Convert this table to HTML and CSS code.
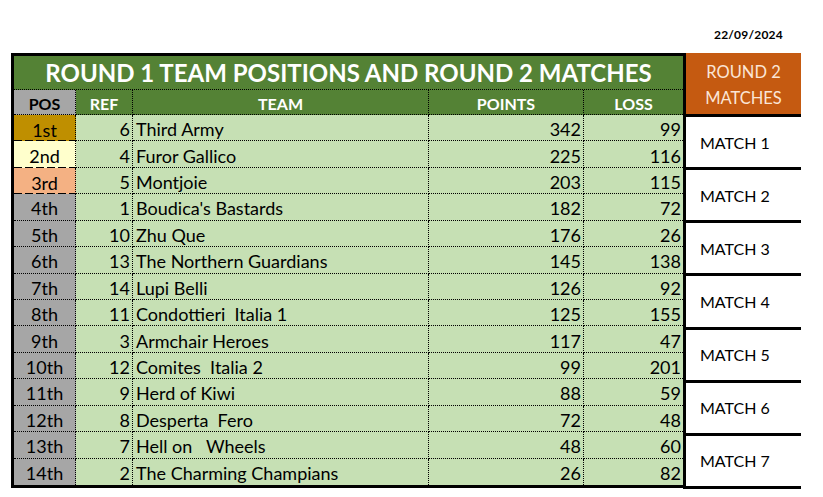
FILE: index.html
```html
<!DOCTYPE html>
<html>
<head>
<meta charset="utf-8">
<link rel="stylesheet" href="styles.css">
</head>
<body>
<div class="topbar"><span class="date">22/09/2024</span></div>
<div class="sheet">
  <div class="standings">
    <div class="title">ROUND 1 TEAM POSITIONS AND ROUND 2 MATCHES</div>
    <div class="grid">
      <div class="hd pos-hd">POS</div>
      <div class="hd">REF</div>
      <div class="hd">TEAM</div>
      <div class="hd">POINTS</div>
      <div class="hd last">LOSS</div>

      <div class="pos gold dash">1st</div><div class="c num">6</div><div class="c team">Third Army</div><div class="c num">342</div><div class="c num last">99</div>
      <div class="pos cream dash">2nd</div><div class="c num">4</div><div class="c team">Furor Gallico</div><div class="c num">225</div><div class="c num last">116</div>
      <div class="pos salmon dash">3rd</div><div class="c num">5</div><div class="c team">Montjoie</div><div class="c num">203</div><div class="c num last">115</div>
      <div class="pos">4th</div><div class="c num">1</div><div class="c team">Boudica's Bastards</div><div class="c num">182</div><div class="c num last">72</div>
      <div class="pos">5th</div><div class="c num">10</div><div class="c team">Zhu Que</div><div class="c num">176</div><div class="c num last">26</div>
      <div class="pos">6th</div><div class="c num">13</div><div class="c team">The Northern Guardians</div><div class="c num">145</div><div class="c num last">138</div>
      <div class="pos">7th</div><div class="c num">14</div><div class="c team">Lupi Belli</div><div class="c num">126</div><div class="c num last">92</div>
      <div class="pos">8th</div><div class="c num">11</div><div class="c team">Condottieri&nbsp; Italia 1</div><div class="c num">125</div><div class="c num last">155</div>
      <div class="pos">9th</div><div class="c num">3</div><div class="c team">Armchair Heroes</div><div class="c num">117</div><div class="c num last">47</div>
      <div class="pos">10th</div><div class="c num">12</div><div class="c team">Comites&nbsp; Italia 2</div><div class="c num">99</div><div class="c num last">201</div>
      <div class="pos">11th</div><div class="c num">9</div><div class="c team">Herd of Kiwi</div><div class="c num">88</div><div class="c num last">59</div>
      <div class="pos">12th</div><div class="c num">8</div><div class="c team">Desperta&nbsp; Fero</div><div class="c num">72</div><div class="c num last">48</div>
      <div class="pos">13th</div><div class="c num">7</div><div class="c team">Hell on&nbsp;&nbsp; Wheels</div><div class="c num">48</div><div class="c num last">60</div>
      <div class="pos bottom">14th</div><div class="c num bottom">2</div><div class="c team bottom">The Charming Champians</div><div class="c num bottom">26</div><div class="c num last bottom">82</div>
    </div>
  </div>
  <div class="matches">
    <div class="m-head">ROUND 2<br>MATCHES</div>
    <div class="match">MATCH 1</div>
    <div class="match">MATCH 2</div>
    <div class="match">MATCH 3</div>
    <div class="match">MATCH 4</div>
    <div class="match">MATCH 5</div>
    <div class="match">MATCH 6</div>
    <div class="match last-match">MATCH 7</div>
  </div>
</div>
</body>
</html>
```
FILE: styles.css
```css
* { box-sizing: border-box; }
html, body { margin: 0; padding: 0; background: #fff; }
body {
  width: 823px;
  height: 497px;
  font-family: Lato, "Liberation Sans", sans-serif;
  color: #000;
  overflow: hidden;
}
.topbar {
  height: 53px;
  padding-top: 27px;
  padding-left: 714px;
}
.date {
  font-size: 12px;
  font-weight: 700;
  letter-spacing: 0.2px;
  line-height: 16px;
  display: block;
}
.sheet {
  display: flex;
  align-items: flex-start;
  margin-left: 11px;
}
.standings {
  width: 675px;
  border: 3px solid #000;
  background: #c6e0b4;
}
.title {
  height: 34px;
  background: #548235;
  color: #fff;
  font-weight: 700;
  font-size: 24px;
  text-align: center;
  line-height: 34px;
  border-bottom: 1px dotted #000;
}
.grid {
  display: grid;
  grid-template-columns: 62px 57px 296px 155px 99px;
  grid-template-rows: 25px repeat(14, 1fr);
  height: 395px;
}
.grid > div {
  border-right: 1px dotted #000;
  border-bottom: 1px dotted #000;
  display: flex;
  align-items: center;
  font-size: 18px;
  white-space: pre;
  padding-top: 3px;
}
.grid > .last { border-right: none; }
.grid > .bottom { border-bottom: none; }
.hd {
  background: #548235;
  color: #fff;
  font-weight: 700;
  font-size: 16px !important;
  justify-content: center;
  padding-top: 2px !important;
}
.hd.pos-hd { background: #a6a6a6; color: #000; }
.pos {
  background: #a6a6a6;
  justify-content: center;
  position: relative;
}
.pos.gold { background: #bf8f00; }
.pos.cream { background: #ffffcc; }
.pos.salmon { background: #f4b183; }
.pos.dash { border-bottom: none; }
.pos.dash::after {
  content: "";
  position: absolute;
  left: 0;
  right: 0;
  bottom: -1px;
  height: 2px;
  background: repeating-linear-gradient(90deg, #000 0 8px, transparent 8px 11px);
}
.num { justify-content: flex-end; padding-right: 2px; }
.team { padding-left: 3px; }

.matches {
  width: 115px;
  display: flex;
  flex-direction: column;
}
.m-head {
  height: 61px;
  background: #c55a11;
  color: #fbe5d6;
  font-size: 16.5px;
  text-align: center;
  line-height: 26px;
  padding-top: 6px;
}
.match {
  height: 53.14px;
  border-top: 3px solid #000;
  display: flex;
  align-items: center;
  font-size: 16px;
  margin-left: -3px;
  padding-left: 17px;
}
.match.last-match { border-bottom: 3px solid #000; height: 56.14px; }
```
